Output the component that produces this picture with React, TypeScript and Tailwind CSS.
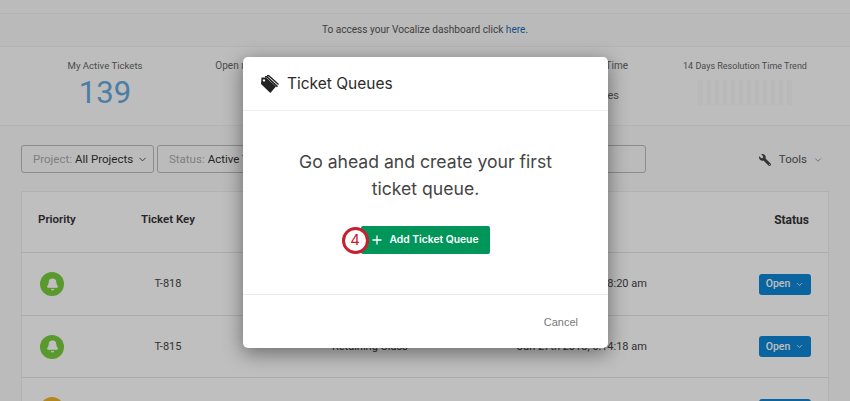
import { Bell, ChevronDown, Plus } from 'lucide-react';
import { FaWrench } from 'react-icons/fa';

const rows = [
  { id: 1, key: 'T-818', name: 'Retaining Class', date: 'Jun 27th 2018, 6:18:20 am', status: 'Open', color: 'bg-[#79cc3d]' },
  { id: 2, key: 'T-815', name: 'Retaining Class', date: 'Jun 27th 2018, 6:14:18 am', status: 'Open', color: 'bg-[#79cc3d]' },
  // only the top edge of this row is on screen
  { id: 3, key: '', name: '', date: '', status: '', color: 'bg-[#f0b429]' },
];

const bars = [0, 1, 2, 3, 4, 5, 6, 7, 8, 9, 10, 11];

const TagsIcon = () => (
  <svg width="20" height="20" viewBox="0 0 20 20" fill="currentColor">
    <path d="M7 1 L9 1 L19 10 L18.2 11 L8.5 2.4 L7 2.4 Z" />
    <path d="M5 2 L7 2 L18 12 L17 13.2 L6.5 3.6 L5 3.6 Z" />
    <path fillRule="evenodd" d="M1.5 3.5 L6 3.5 L16 12.6 L10.3 19 L1 10 Z M4 5.2 a1.2 1.2 0 1 0 0.01 0 Z" />
  </svg>
);

const Stat = ({ label, className, labelClass, children }: { label: string; className: string; labelClass: string; children?: React.ReactNode }) => (
  <div className={`flex flex-col items-center shrink-0 ${className}`}>
    <span className={`leading-[14px] text-[#666] whitespace-nowrap ${labelClass}`}>{label}</span>
    {children}
  </div>
);

const Filter = ({ label, value, className }: { label: string; value: string; className: string }) => (
  <div className={`h-[28px] flex items-center border border-[#bbb] rounded-[3px] pl-[11px] pt-[1px] text-[11.5px] whitespace-nowrap overflow-hidden ${className}`}>
    <span className="text-[#aaa] mr-[3px]">{label}</span>
    <span className="text-[#333]">{value}</span>
    <ChevronDown className="ml-[4px] w-[11px] h-[11px] text-[#444]" />
  </div>
);

const App = () => {
  return (
    <div className="relative w-[850px] h-[401px] overflow-hidden bg-[#fafafa] font-['Roboto',sans-serif]">
      <div className="h-[14px] bg-[#fafafa] border-b border-[#f0f0f0]" />
      <div className="h-[33px] flex items-center justify-center bg-[#f8f8f8] border-b border-[#f0f0f0] text-[10.1px] text-[#555]">
        To access your Vocalize dashboard click&nbsp;<span className="text-[#1a6fb5]">here.</span>
      </div>

      <div className="h-[79px] flex items-start bg-[#fcfcfc] border-b border-[#f0f0f0] pt-[12px]">
        <Stat label="My Active Tickets" labelClass="text-[9.6px]" className="w-[210px]">
          <span className="text-[31px] leading-[38px] mt-[1px] text-[#65a9dd]">139</span>
        </Stat>
        <Stat label="Open n" labelClass="text-[10px]" className="w-[34px] ml-[4px]" />
        <div className="w-[380px] shrink-0 flex flex-col items-end text-[10px] leading-[14px] text-[#666]">
          <span>Time</span>
          <span className="mt-[16px] text-[11px] pr-[9px]">es</span>
        </div>
        <Stat label="14 Days Resolution Time Trend" labelClass="text-[9px]" className="w-[208px] ml-[13px]">
          <div className="flex gap-[3.9px] mt-[7px]">
            {bars.map((b) => (
              <div key={b} className="w-[4.2px] h-[25px] bg-[#f7f7f7]" />
            ))}
          </div>
        </Stat>
      </div>

      <div className="flex items-center pt-[19px] pl-[21px] pr-[21px]">
        <Filter label="Project:" value="All Projects" className="w-[133px]" />
        <Filter label="Status:" value="Active Tickets" className="w-[140px] ml-[3px]" />
        <div className="h-[28px] w-[346px] ml-[3px] border border-[#bbb] rounded-[3px]" />
        <div className="ml-auto mr-[6px] pt-[1px] flex items-center text-[11.5px] text-[#555]">
          <FaWrench className="w-[12px] h-[12px] mr-[8px] scale-x-[-1] text-[#444]" />
          Tools
          <ChevronDown className="ml-[6px] w-[10px] h-[10px] text-[#888]" />
        </div>
      </div>

      <div className="mx-[21px] mt-[18px] border border-[#ececec] bg-white">
        <div className="h-[61px] flex items-center text-[11.5px] font-semibold text-[#333] border-b border-[#e6e6e6] pb-[5px] whitespace-nowrap">
          <span className="w-[118px] pl-[16px]">Priority</span>
          <span className="w-[56px] text-center">Ticket Key</span>
          <span className="ml-auto mr-[19px] text-[12px] font-bold">Status</span>
        </div>
        {rows.map((row) => (
          <div key={row.id} className="h-[62.5px] flex items-center pt-[1px] text-[11px] text-[#444] border-b border-[#e6e6e6]">
            <div className="w-[118px] pl-[18px]">
              <div className={`w-[24px] h-[24px] rounded-full flex items-center justify-center ${row.color}`}>
                <Bell className="w-[13px] h-[13px] text-white" fill="currentColor" />
              </div>
            </div>
            <span className="w-[56px] text-center">{row.key}</span>
            <span className="ml-[136px] w-[125px]">{row.name}</span>
            <span className="ml-[60px] w-[140px] whitespace-nowrap">{row.date}</span>
            <div className="ml-auto mr-[17px] w-[52px] h-[21px] rounded-[3px] bg-[#0e86d4] flex items-center justify-center text-[10.5px] font-medium text-white">
              {row.status}
              {row.status && <ChevronDown className="ml-[5px] w-[9px] h-[9px]" />}
            </div>
          </div>
        ))}
      </div>

      {/* dimmed backdrop + dialog */}
      <div className="absolute inset-0 bg-black/25" />
      <div className="absolute left-[243px] top-[57px] w-[365px] h-[291px] flex flex-col bg-white rounded-[5px] shadow-[0_5px_20px_rgba(0,0,0,0.45)] font-['Inter',sans-serif]">
        <div className="h-[54px] flex items-center pl-[17px] border-b border-[#f0f0f0] text-[#222]">
          <TagsIcon />
          <span className="ml-[7px] text-[15.5px] text-[#2b2b2b]">Ticket Queues</span>
        </div>
        <div className="h-[184px] flex flex-col items-center border-b border-[#ececec]">
          <p className="mt-[37px] w-[280px] text-center text-[17.6px] leading-[27px] text-[#444]">
            Go ahead and create your first ticket queue.
          </p>
          <div className="relative mt-[24px] -ml-[1px] w-[129px] h-[28px] rounded-[2px] bg-[#00965a] flex items-center justify-center text-[10.3px] font-semibold text-white">
            <Plus className="w-[14px] h-[14px] mr-[6px] -ml-[2px]" strokeWidth={2.2} />
            Add Ticket Queue
            <div className="absolute left-[-19px] top-[0.5px] w-[27px] h-[27px] rounded-full bg-white border-[3px] border-[#c8202f] flex items-center justify-center text-[15px] font-normal text-[#c8202f]">
              4
            </div>
          </div>
        </div>
        <div className="flex-1 flex items-center justify-end pr-[30px] pt-[1px] text-[11px] text-[#777] font-['Liberation_Sans',sans-serif]">
          Cancel
        </div>
      </div>
    </div>
  );
};

export default App;
